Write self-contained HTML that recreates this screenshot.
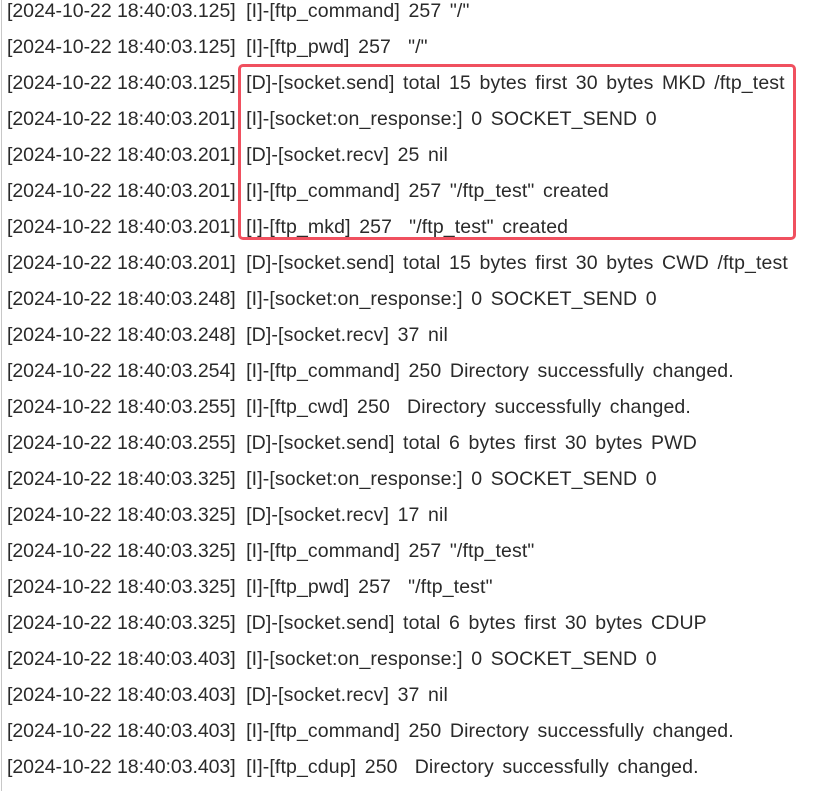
<!DOCTYPE html>
<html><head><meta charset="utf-8"><style>
html,body{margin:0;padding:0;background:#fff;width:818px;height:791px;overflow:hidden;position:relative}
.l{position:absolute;left:1px;top:0;width:1px;height:791px;background:#c8c8c8}
.t{position:absolute;left:7px;top:-7px;font-family:"Liberation Sans",sans-serif;font-size:19.5px;line-height:36px;color:#2a2a2a;white-space:pre;word-spacing:3px;letter-spacing:0.12px}
.t i{font-style:normal;letter-spacing:-0.05px;word-spacing:0;margin-right:2px}
.b{position:absolute;left:238px;top:64px;width:552px;height:170px;border:3px solid #f0505f;border-radius:5px}
</style></head><body>
<div class="l"></div>
<div class="t"><i>[2024-10-22 18:40:03.125]</i> [I]-[ftp_command] 257 "/"
<i>[2024-10-22 18:40:03.125]</i> [I]-[ftp_pwd] 257  "/"
<i>[2024-10-22 18:40:03.125]</i> [D]-[socket.send] total 15 bytes first 30 bytes MKD /ftp_test
<i>[2024-10-22 18:40:03.201]</i> [I]-[socket:on_response:] 0 SOCKET_SEND 0
<i>[2024-10-22 18:40:03.201]</i> [D]-[socket.recv] 25 nil
<i>[2024-10-22 18:40:03.201]</i> [I]-[ftp_command] 257 "/ftp_test" created
<i>[2024-10-22 18:40:03.201]</i> [I]-[ftp_mkd] 257  "/ftp_test" created
<i>[2024-10-22 18:40:03.201]</i> [D]-[socket.send] total 15 bytes first 30 bytes CWD /ftp_test
<i>[2024-10-22 18:40:03.248]</i> [I]-[socket:on_response:] 0 SOCKET_SEND 0
<i>[2024-10-22 18:40:03.248]</i> [D]-[socket.recv] 37 nil
<i>[2024-10-22 18:40:03.254]</i> [I]-[ftp_command] 250 Directory successfully changed.
<i>[2024-10-22 18:40:03.255]</i> [I]-[ftp_cwd] 250  Directory successfully changed.
<i>[2024-10-22 18:40:03.255]</i> [D]-[socket.send] total 6 bytes first 30 bytes PWD
<i>[2024-10-22 18:40:03.325]</i> [I]-[socket:on_response:] 0 SOCKET_SEND 0
<i>[2024-10-22 18:40:03.325]</i> [D]-[socket.recv] 17 nil
<i>[2024-10-22 18:40:03.325]</i> [I]-[ftp_command] 257 "/ftp_test"
<i>[2024-10-22 18:40:03.325]</i> [I]-[ftp_pwd] 257  "/ftp_test"
<i>[2024-10-22 18:40:03.325]</i> [D]-[socket.send] total 6 bytes first 30 bytes CDUP
<i>[2024-10-22 18:40:03.403]</i> [I]-[socket:on_response:] 0 SOCKET_SEND 0
<i>[2024-10-22 18:40:03.403]</i> [D]-[socket.recv] 37 nil
<i>[2024-10-22 18:40:03.403]</i> [I]-[ftp_command] 250 Directory successfully changed.
<i>[2024-10-22 18:40:03.403]</i> [I]-[ftp_cdup] 250  Directory successfully changed.</div>
<div class="b"></div>
</body></html>
